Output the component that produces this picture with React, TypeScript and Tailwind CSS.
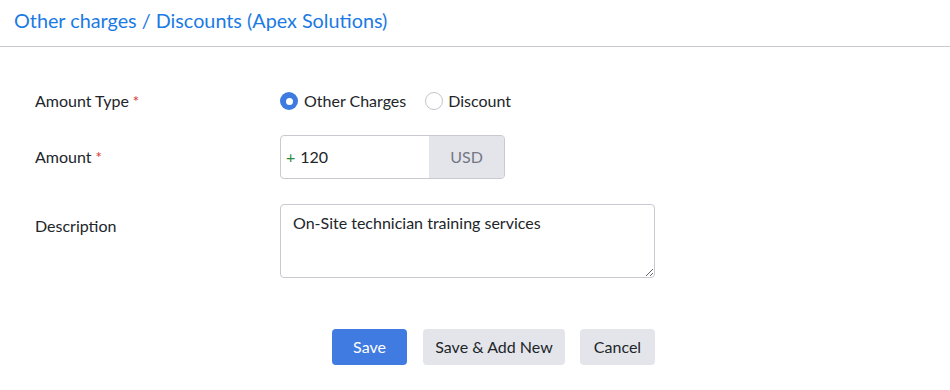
import type { JSX } from 'react';

function Req() {
  return <span className="ml-1 text-[#e03131] text-[15px]">*</span>;
}

export default function App(): JSX.Element {
  return (
    <div className="min-h-screen bg-white text-[16px] text-[#212529] font-['Lato',sans-serif]">
      <header className="h-[47px] border-b border-[#c9c9d1] px-[14px] flex items-center">
        <h1 className="text-[19.8px] text-[#1b7ae4] pb-[4px]">Other charges / Discounts (Apex Solutions)</h1>
      </header>

      <div className="w-[655px] pl-[35px] pt-[34px]">
        <div className="grid grid-cols-[245px_1fr] items-center">
          <label className="h-[40px] flex items-center">
            Amount Type<Req />
          </label>
          <div className="h-[40px] flex items-center">
            <label className="flex items-center gap-[6px] mr-[19px]">
              <span className="w-[18px] h-[18px] rounded-full bg-[#3d7be0] flex items-center justify-center">
                <span className="w-[7px] h-[7px] rounded-full bg-white" />
              </span>
              Other Charges
            </label>
            <label className="flex items-center gap-[5px]">
              <span className="w-[18px] h-[18px] rounded-full border border-[#c4c4cc] bg-white" />
              Discount
            </label>
          </div>

          <label className="mt-[14px] h-[44px] flex items-center">
            Amount<Req />
          </label>
          <div className="mt-[14px] flex w-[225px] h-[44px] border border-[#c9c9d1] rounded-[4px] overflow-hidden">
            <div className="flex-1 flex items-center pl-[5px]">
              <span className="text-[#2a8a3e] mr-[5px]">+</span>
              <span>120</span>
            </div>
            <div className="w-[75px] bg-[#e4e5ea] flex items-center justify-center text-[#737883]">USD</div>
          </div>

          <label className="self-start mt-[25px] pt-[10px]">Description</label>
          <textarea
            className="mt-[25px] w-[375px] h-[74px] border border-[#c9c9d1] rounded-[4px] px-[12px] py-[7px] outline-none resize-y leading-[22px]"
            defaultValue="On-Site technician training services"
          />
        </div>

        <div className="mt-[51px] flex justify-end">
          <button className="h-[36px] w-[75px] rounded-[4px] bg-[#3f7be0] text-white">Save</button>
          <button className="ml-[16px] h-[36px] w-[142px] rounded-[4px] bg-[#e4e5ea] text-[#212529]">Save &amp; Add New</button>
          <button className="ml-[15px] h-[36px] w-[75px] rounded-[4px] bg-[#e4e5ea] text-[#212529]">Cancel</button>
        </div>
      </div>
    </div>
  );
}
